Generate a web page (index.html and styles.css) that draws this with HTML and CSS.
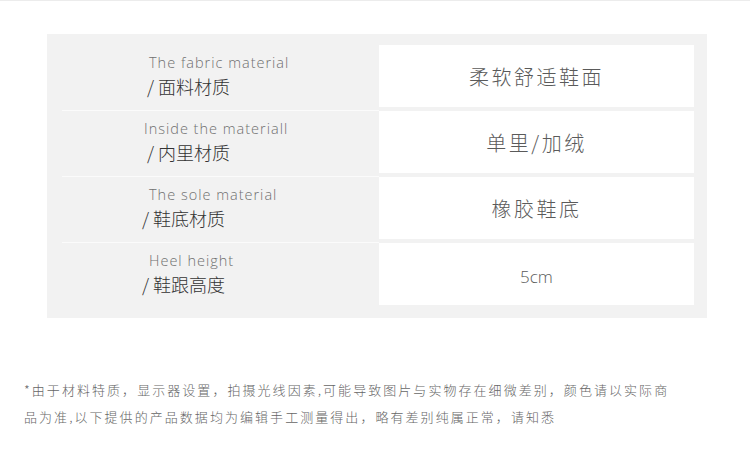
FILE: index.html
```html
<!DOCTYPE html>
<html lang="zh-CN">
<head>
    <meta charset="UTF-8">
    <meta name="viewport" content="width=device-width, initial-scale=1.0">
    <title>产品参数</title>
    <link rel="stylesheet" href="styles.css">
</head>
<body>
    <div class="top-line"></div>

    <div class="spec">
        <div class="row">
            <div class="label">
                <span class="en">The fabric material</span>
                <span class="cn">/ 面料材质</span>
            </div>
            <div class="value">柔软舒适鞋面</div>
        </div>
        <div class="row">
            <div class="label">
                <span class="en shift-left">Inside the materiall</span>
                <span class="cn">/ 内里材质</span>
            </div>
            <div class="value">单里/加绒</div>
        </div>
        <div class="row">
            <div class="label">
                <span class="en">The sole material</span>
                <span class="cn shift-left">/ 鞋底材质</span>
            </div>
            <div class="value">橡胶鞋底</div>
        </div>
        <div class="row">
            <div class="label">
                <span class="en">Heel height</span>
                <span class="cn shift-left">/ 鞋跟高度</span>
            </div>
            <div class="value num">5cm</div>
        </div>
    </div>

    <p class="note">*由于材料特质，显示器设置，拍摄光线因素,可能导致图片与实物存在细微差别，颜色请以实际商<br>品为准,以下提供的产品数据均为编辑手工测量得出，略有差别纯属正常，请知悉</p>
</body>
</html>
```

FILE: styles.css
```css
/* Product spec table */
body {
    margin: 0;
    padding: 0;
    background-color: #fff;
    font-family: "Noto Sans CJK SC", "Noto Sans", sans-serif;
    width: 750px;
    height: 458px;
    overflow: hidden;
}

.top-line {
    height: 1px;
    background-color: #ececec;
}

.spec {
    margin: 33px 0 0 47px;
    width: 660px;
    box-sizing: border-box;
    padding: 11px 13px 13px 0;
    background-color: #f2f2f2;
}

.row {
    display: flex;
}

.label {
    flex: 0 0 232px;
    margin-left: 15px;
    padding: 0 0 4px 85px;
    display: flex;
    flex-direction: column;
    justify-content: center;
    border-bottom: 1px solid #fbfbfb;
}

.row:last-child .label {
    border-bottom: none;
    padding-bottom: 0;
}

.en {
    font-family: "Open Sans", "Noto Sans", sans-serif;
    font-weight: 300;
    font-size: 14.5px;
    line-height: 20px;
    letter-spacing: 1px;
    color: #707070;
    padding-left: 2px;
}

.cn {
    font-size: 18px;
    line-height: 26px;
    font-weight: 300;
    color: #333;
}

.shift-left {
    margin-left: -5px;
}

.value {
    flex: 1;
    height: 62px;
    margin-bottom: 4px;
    background-color: #fff;
    display: flex;
    align-items: center;
    justify-content: center;
    font-size: 20px;
    font-weight: 300;
    letter-spacing: 2.5px;
    color: #5a5a5a;
}

.row:last-child .value {
    margin-bottom: 0;
}

.value.num {
    font-family: "Open Sans", "Noto Sans", sans-serif;
    font-size: 17px;
    letter-spacing: 0;
    padding-top: 4px;
    box-sizing: border-box;
}

.note {
    margin: 58px 0 0 24px;
    font-size: 13px;
    line-height: 27px;
    letter-spacing: 2.05px;
    color: #666;
    font-weight: 300;
}
```
